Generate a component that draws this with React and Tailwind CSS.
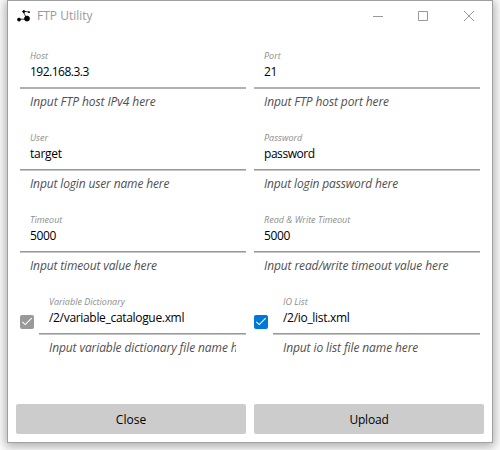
const fields = [
  { label: "Host", value: "192.168.3.3", hint: "Input FTP host IPv4 here", valueTrack: "tracking-[-0.5px]", hintTrack: "tracking-[-0.08px]", line: "border-[#b0b0b0] bg-[#b0b0b0]" },
  { label: "Port", value: "21", hint: "Input FTP host port here", valueTrack: "tracking-[-0.4px]", hintTrack: "tracking-[-0.12px]", line: "border-[#b0b0b0] bg-[#b0b0b0]" },
  { label: "User", value: "target", hint: "Input login user name here", valueTrack: "tracking-[-0.25px]", hintTrack: "tracking-[-0.14px]" },
  { label: "Password", value: "password", hint: "Input login password here", valueTrack: "tracking-[-0.45px]", hintTrack: "tracking-[-0.16px]" },
  { label: "Timeout", value: "5000", hint: "Input timeout value here", valueTrack: "tracking-[-0.4px]", hintTrack: "tracking-[-0.14px]" },
  { label: "Read & Write Timeout", value: "5000", hint: "Input read/write timeout value here", valueTrack: "tracking-[-0.4px]", hintTrack: "tracking-[-0.11px]" },
  { label: "Variable Dictionary", value: "/2/variable_catalogue.xml", hint: "Input variable dictionary file name here", valueTrack: "tracking-[-0.32px]", hintTrack: "tracking-[-0.1px]", check: "bg-[#999999]" },
  { label: "IO List", value: "/2/io_list.xml", hint: "Input io list file name here", valueTrack: "tracking-[-0.3px]", hintTrack: "tracking-[-0.1px]", check: "bg-[#0078d7]" },
];

function Check({ color }) {
  return (
    <span className={`mt-[21px] mr-[5px] flex h-[14px] w-[14px] shrink-0 rounded-[2px] ${color}`}>
      <svg width="14" height="14" viewBox="0 0 14 14" fill="none" stroke="#fff" strokeWidth="1.1">
        <path d="M2.3 6.8 5.2 9.6 11.7 3.2" />
      </svg>
    </span>
  );
}

function Field({ label, value, hint, valueTrack, hintTrack, check, line = "border-[#999] bg-[#c4c4c4]" }) {
  return (
    <div className="flex h-[82px] w-[226px]">
      {check && <Check color={check} />}
      <div className="min-w-0 flex-1">
        <div className="px-[10px]">
          <div className="h-4 text-[9px] leading-4 text-[#8c8c8c] italic">{label}</div>
          <div className={`h-[23px] text-[12px] leading-4 text-black ${valueTrack}`}>{value}</div>
        </div>
        <div className={`h-[2px] border-t ${line}`} />
        <div className="mx-[10px] mt-[5px] overflow-hidden">
          <div className={`h-4 text-[12px] leading-4 whitespace-nowrap text-[#505050] italic ${hintTrack}`}>{hint}</div>
        </div>
      </div>
    </div>
  );
}

export default function App() {
  return (
    <div className="h-[450px] w-[500px] overflow-hidden bg-white px-[7px] font-['Open_Sans','Noto_Sans',sans-serif]">
      <div className="flex h-[443px] w-[486px] flex-col border border-[#a0a0a0] bg-white shadow-[0_2px_10px_2px_rgba(0,0,0,0.32)]">
        <header className="flex h-[29px] shrink-0 items-center pl-[9px]">
          <svg width="14" height="14" viewBox="0 0 14 14" stroke="#000" strokeWidth="0.8">
            <path d="M2 10.2H10M10 10 6 2.2 12 3" fill="none" />
            <circle cx="2" cy="10.6" r="1.5" />
            <circle cx="10" cy="9.6" r="2.5" />
            <circle cx="6.8" cy="2.6" r="1.1" />
            <circle cx="12" cy="3.2" r="0.6" />
          </svg>
          <span className="mt-px ml-[6px] text-[12px] leading-4 text-[#999]">FTP Utility</span>
          <svg className="ml-auto mr-[16px]" width="104" height="12" viewBox="0 0 104 12" fill="none" stroke="#999">
            <path d="M1 6.5H11" />
            <path d="M46.5 1.5H55.5V10.5H46.5Z" />
            <path d="M92 1 102 11M102 1 92 11" />
          </svg>
        </header>
        <main className="mt-[18px] grid grid-cols-[226px_226px] gap-x-2 pl-3">
          {fields.map((f) => (
            <Field key={f.label} {...f} />
          ))}
        </main>
        <footer className="mt-auto mb-2 flex gap-2 px-2">
          <button className="h-[30px] w-[230px] rounded-[2px] bg-[#ccc] pt-[2px] text-[12px] text-black">Close</button>
          <button className="h-[30px] w-[230px] rounded-[2px] bg-[#ccc] pt-[2px] text-[12px] tracking-[-0.2px] text-black">Upload</button>
        </footer>
      </div>
    </div>
  );
}
